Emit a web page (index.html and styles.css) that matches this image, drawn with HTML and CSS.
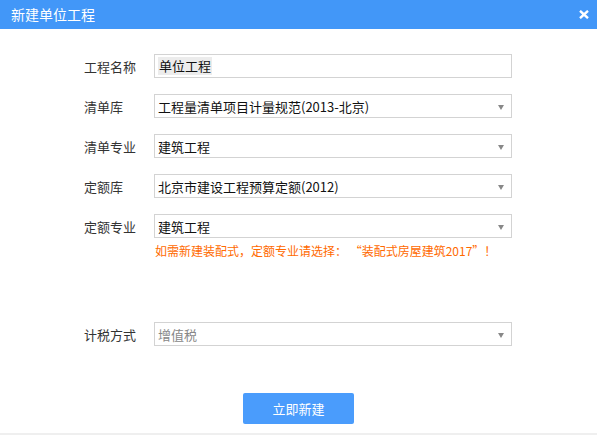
FILE: index.html
```html
<!DOCTYPE html>
<html lang="zh">
<head>
<meta charset="utf-8">
<title>新建单位工程</title>
<link rel="stylesheet" href="styles.css">
</head>
<body>
<div class="dialog">
  <div class="titlebar">
    <span class="title">新建单位工程</span>
    <svg class="close" width="10" height="9" viewBox="0 0 10 9"><path d="M1 0.8 L9 8.2 M9 0.8 L1 8.2" stroke="#fff" stroke-width="2.4" fill="none"/></svg>
  </div>
  <div class="form">
    <div class="row">
      <label class="label">工程名称</label>
      <div class="field"><span class="sel">单位工程</span></div>
    </div>
    <div class="row">
      <label class="label">清单库</label>
      <div class="field select"><span>工程量清单项目计量规范(2013-北京)</span><i class="arrow"></i></div>
    </div>
    <div class="row">
      <label class="label">清单专业</label>
      <div class="field select"><span>建筑工程</span><i class="arrow"></i></div>
    </div>
    <div class="row">
      <label class="label">定额库</label>
      <div class="field select"><span>北京市建设工程预算定额(2012)</span><i class="arrow"></i></div>
    </div>
    <div class="row">
      <label class="label">定额专业</label>
      <div class="field select"><span>建筑工程</span><i class="arrow"></i></div>
    </div>
    <div class="warn">如需新建装配式，定额专业请选择：&nbsp;“装配式房屋建筑2017”！</div>
    <div class="row tax">
      <label class="label">计税方式</label>
      <div class="field select disabled"><span>增值税</span><i class="arrow"></i></div>
    </div>
  </div>
  <div class="actions">
    <button class="btn">立即新建</button>
  </div>
  <div class="bottomline"></div>
</div>
</body>
</html>
```
FILE: styles.css
```css
* { box-sizing: border-box; }
html, body { margin: 0; padding: 0; background: #fff; }
body {
  width: 597px;
  height: 435px;
  overflow: hidden;
  font-family: "Noto Sans CJK SC", "Noto Sans", sans-serif;
  color: #333;
}
.dialog {
  display: flex;
  flex-direction: column;
  height: 435px;
}
.titlebar {
  height: 29px;
  background: #4297f8;
  display: flex;
  align-items: center;
  justify-content: space-between;
  padding: 0 8px 0 11px;
  color: #fff;
}
.title {
  font-size: 14px;
  line-height: 29px;
}
.close {
  display: block;
  margin-top: 0;
}
.form {
  padding: 25px 0 0 84px;
  display: flex;
  flex-direction: column;
}
.row {
  display: flex;
  align-items: center;
  height: 24px;
  margin-bottom: 16px;
}
.label {
  width: 70px;
  font-size: 13px;
  color: #333;
}
.field {
  width: 358px;
  height: 24px;
  border: 1px solid #d3d3d3;
  display: flex;
  align-items: center;
  padding: 0 0 0 3px;
  font-size: 13px;
  color: #111;
  position: relative;
}
.sel {
  background: #ececec;
  padding: 0 1px;
  line-height: 18px;
}
.arrow {
  position: absolute;
  right: 7px;
  top: 10px;
  width: 0;
  height: 0;
  border-left: 3.5px solid transparent;
  border-right: 3.5px solid transparent;
  border-top: 5px solid #888;
}
.disabled {
  color: #888;
}
.warn {
  margin-top: -12px;
  margin-left: 71px;
  font-size: 12px;
  color: #ff6a00;
  line-height: 18px;
}
.row.tax {
  margin-top: 62px;
}
.actions {
  display: flex;
  justify-content: center;
  padding-top: 31px;
}
.btn {
  width: 111px;
  height: 31px;
  border: none;
  border-radius: 2px;
  background: #4a9cfc;
  color: #fff;
  font-family: "Noto Sans CJK SC", sans-serif;
  font-size: 13px;
}
.bottomline {
  margin-top: auto;
  height: 2px;
  background: #efefef;
}
```
